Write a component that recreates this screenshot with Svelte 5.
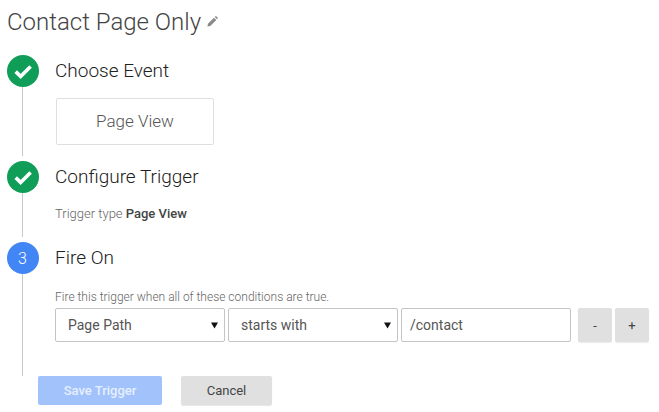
<script>
  // trigger editor, last step is the open one
  const conditions = [
    { label: "Page Path", width: 170 },
    { label: "starts with", width: 170 },
  ];
</script>

<main>
  <h1>
    Contact Page Only
    <svg class="pencil" viewBox="0 0 12 12" width="11" height="11">
      <path d="M0.5 11.5 L1 8.4 L7.6 1.8 L10.2 4.4 L3.6 11 Z M8.4 1 L9.2 0.3 Q9.7 0 10.2 0.3 L11.7 1.8 Q12 2.3 11.7 2.8 L11 3.6 Z" fill="#8a8a8a" />
    </svg>
  </h1>

  <section class="step first">
    <div class="rail">
      <div class="dot done">
        <svg viewBox="0 0 32 32" width="32" height="32"><path d="M8.7 16.6 L13.6 21.4 L23.6 11.4" fill="none" stroke="#fff" stroke-width="3.6" /></svg>
      </div>
      <div class="line"></div>
    </div>
    <div class="body">
      <h2>Choose Event</h2>
      <div class="card">Page View</div>
    </div>
  </section>

  <section class="step second">
    <div class="rail">
      <div class="dot done">
        <svg viewBox="0 0 32 32" width="32" height="32"><path d="M8.7 16.6 L13.6 21.4 L23.6 11.4" fill="none" stroke="#fff" stroke-width="3.6" /></svg>
      </div>
      <div class="line"></div>
    </div>
    <div class="body">
      <h2>Configure Trigger</h2>
      <p class="type">Trigger type <b>Page View</b></p>
    </div>
  </section>

  <section class="step third">
    <div class="rail">
      <div class="dot active">3</div>
      <div class="line flush"></div>
    </div>
    <div class="body">
      <h2>Fire On</h2>
      <p class="hint">Fire this trigger when all of these conditions are true.</p>
      <div class="row">
        {#each conditions as c}
          <div class="field select" style="width: {c.width}px">
            {c.label}
            <svg viewBox="0 0 7 7" width="7" height="7"><path d="M0 0.5 H7 L3.5 6.5 Z" fill="#111" /></svg>
          </div>
        {/each}
        <div class="field text">/contact</div>
        <div class="btns">
          <button class="small">-</button>
          <button class="small">+</button>
        </div>
      </div>
    </div>
  </section>

  <footer>
    <button class="save">Save Trigger</button>
    <button class="cancel">Cancel</button>
  </footer>
</main>

<style>
  :global(body) {
    background: #fff;
  }
  main {
    width: 659px;
    height: 412px;
    overflow: hidden;
    font-family: Roboto, "Liberation Sans", sans-serif;
    color: #444;
  }
  h1 {
    margin: 0;
    padding: 7px 0 0 7px;
    height: 55px;
    box-sizing: border-box;
    font-size: 24px;
    line-height: 30px;
    font-weight: 300;
    color: #444;
  }
  .pencil {
    vertical-align: 3px;
  }
  .step {
    display: flex;
    padding-left: 7px;
    box-sizing: border-box;
  }
  .first {
    height: 106px;
  }
  .second {
    height: 81px;
  }
  .third {
    height: 134px;
  }
  .rail {
    width: 48px;
    flex: none;
    display: flex;
    flex-direction: column;
  }
  .dot {
    width: 32px;
    height: 32px;
    border-radius: 50%;
    flex: none;
    display: flex;
    align-items: center;
    justify-content: center;
    color: #fff;
    font-size: 16px;
    font-weight: 300;
    padding-right: 1px;
    box-sizing: border-box;
  }
  .done {
    background: #0f9d58;
    padding-right: 0;
  }
  .active {
    background: #4285f4;
  }
  .line {
    width: 1px;
    flex: 1;
    margin: 0 0 5px 15px;
    background: #c8c8c8;
  }
  .flush {
    margin-bottom: 0;
  }
  h2 {
    margin: 0;
    font-size: 19px;
    line-height: 32px;
    font-weight: 300;
    color: #212121;
  }
  .card {
    width: 158px;
    height: 47px;
    box-sizing: border-box;
    margin: 11px 0 0 1px;
    padding-bottom: 2px;
    border: 1px solid #dfdfdf;
    border-radius: 2px;
    display: flex;
    align-items: center;
    justify-content: center;
    font-size: 17px;
    font-weight: 300;
    color: #555;
  }
  .type {
    margin: 12px 0 0;
    font-size: 13px;
    line-height: 18px;
    color: #666;
    font-weight: 300;
  }
  .type b {
    font-weight: 500;
    color: #444;
  }
  .hint {
    margin: 15px 0 0;
    font-size: 12px;
    line-height: 16px;
    color: #666;
    font-weight: 300;
  }
  .row {
    display: flex;
    gap: 3px;
    margin-top: 3px;
  }
  .field {
    height: 34px;
    box-sizing: border-box;
    padding-bottom: 1px;
    border: 1px solid #c4c4c4;
    border-radius: 2px;
    display: flex;
    align-items: center;
    font-size: 14px;
    color: #555;
  }
  .select {
    justify-content: space-between;
    padding: 0 6px 1px 12px;
  }
  .select svg {
    margin-top: 2px;
  }
  .text {
    width: 170px;
    padding-left: 8px;
  }
  .btns {
    display: flex;
    gap: 3px;
    margin-left: 4px;
  }
  button {
    border: 0;
    border-radius: 2px;
    font-family: inherit;
    padding: 0;
  }
  .small {
    width: 34px;
    height: 34px;
    background: #e0e0e0;
    box-shadow: 0 1px 1px rgba(0, 0, 0, 0.08);
    color: #444;
    font-size: 13px;
  }
  footer {
    display: flex;
    padding-left: 38px;
    gap: 19px;
  }
  .save {
    width: 124px;
    height: 29px;
    background: #a1c2fa;
    color: #e6efff;
    font-size: 13px;
    font-weight: 500;
  }
  .cancel {
    width: 91px;
    height: 29px;
    background: #e0e0e0;
    box-shadow: 0 1px 1px rgba(0, 0, 0, 0.1);
    color: #444;
    font-size: 13px;
  }
</style>
